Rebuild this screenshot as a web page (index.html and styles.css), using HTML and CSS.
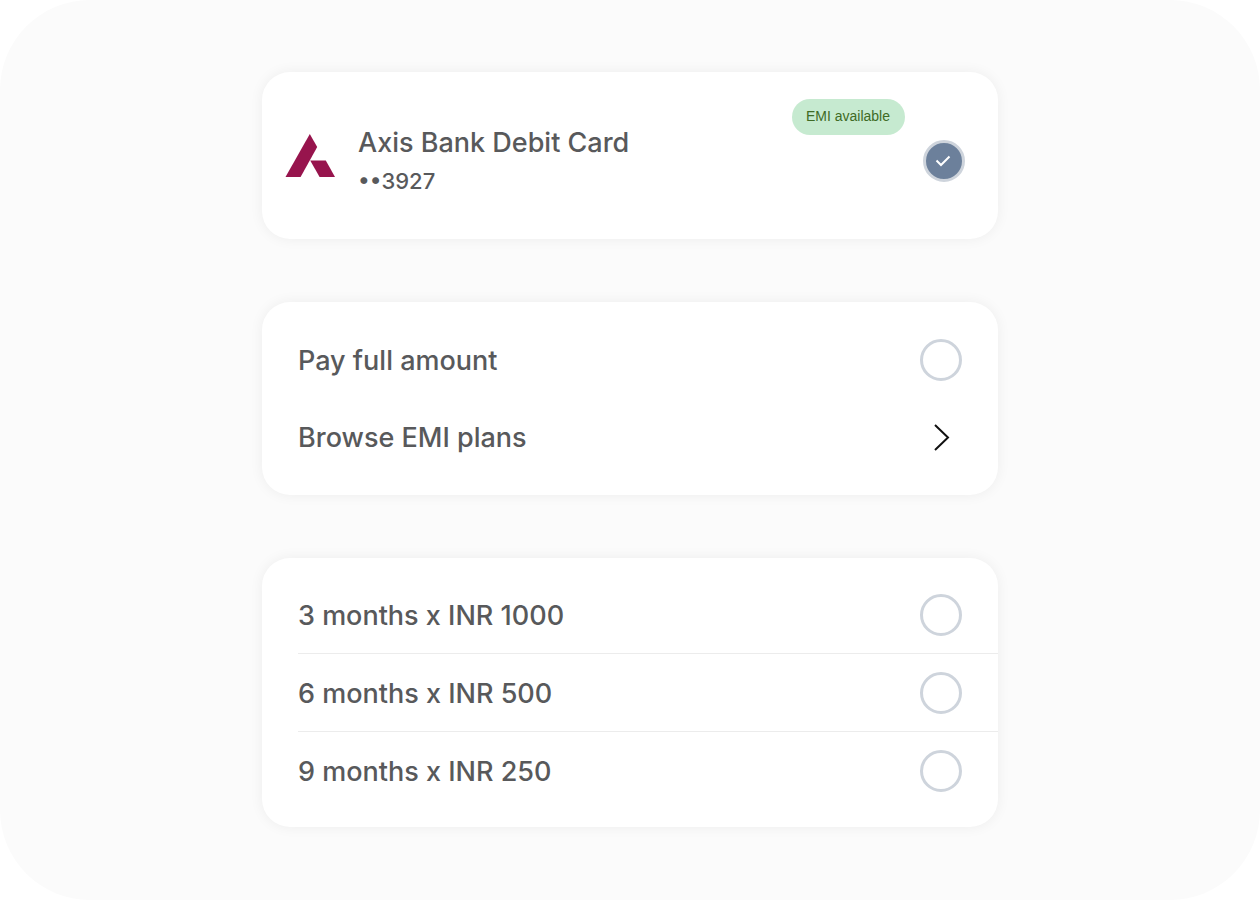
FILE: index.html
```html
<!DOCTYPE html>
<html lang="en">
<head>
  <meta charset="UTF-8">
  <meta name="viewport" content="width=device-width, initial-scale=1.0">
  <title>Choose EMI plan</title>
  <link rel="stylesheet" href="styles.css">
</head>
<body>
<main class="screen">
  <form class="payment">

    <label class="card bank-card">
      <svg class="bank-logo" viewBox="0 0 50 44" aria-hidden="true">
        <path d="M24.8 0L32.2 13L15.6 43H0.5Z"/>
        <path d="M25.2 26.5H40.8L50 43H34.6Z"/>
      </svg>
      <span class="bank-info">
        <span class="bank-name">Axis Bank Debit Card</span>
        <span class="bank-number">••3927</span>
      </span>
      <span class="badge">EMI available</span>
      <span class="check">
        <input type="radio" class="radio" name="card" value="3927" checked>
        <svg class="check-icon" viewBox="0 0 42 42" aria-hidden="true">
          <path d="M13.5 20.5L18 25L26.5 16.5"/>
        </svg>
      </span>
    </label>

    <div class="card options">
      <label class="row">
        <span>Pay full amount</span>
        <input type="radio" class="radio" name="plan" value="full">
      </label>
      <button type="button" class="row browse">
        <span>Browse EMI plans</span>
        <svg class="chevron" viewBox="0 0 42 42" aria-hidden="true">
          <path d="M15 9L28 21.5L15 34"/>
        </svg>
      </button>
    </div>

    <div class="card plans">
      <label class="row">
        <span>3 months x INR 1000</span>
        <input type="radio" class="radio" name="plan" value="3">
      </label>
      <label class="row">
        <span>6 months x INR 500</span>
        <input type="radio" class="radio" name="plan" value="6">
      </label>
      <label class="row">
        <span>9 months x INR 250</span>
        <input type="radio" class="radio" name="plan" value="9">
      </label>
    </div>

  </form>
</main>
</body>
</html>
```
FILE: styles.css
```css
* { box-sizing: border-box; }
body { margin: 0; background: #fff; color: #58595b; font-family: Inter, "Liberation Sans", sans-serif; font-size: 27px; font-weight: 500; line-height: 36px; }

.screen { min-height: 100vh; padding: 72px 24px; background: #fbfbfb; border-radius: 90px; }
.payment { display: flex; flex-direction: column; gap: 63px; max-width: 736px; margin: 0 auto; }
.card { background: #fff; border-radius: 28px; box-shadow: 0 0 14px rgba(0, 0, 0, 0.06); }

/* selected card */
.bank-card { display: flex; align-items: center; min-height: 167px; padding: 27px 33px 17px 23px; cursor: pointer; }
.bank-logo { width: 50px; height: 44px; margin-bottom: 10px; fill: #97144d; flex: none; }
.bank-info { flex: 1; display: flex; flex-direction: column; gap: 4px; padding-top: 1px; margin-left: 23px; }
.bank-number { font-size: 22px; line-height: 32px; }
.badge { align-self: flex-start; padding: 0 15px 2px 14px; border-radius: 18px; background: #c6ead0; color: #3f6b25; font-family: "Liberation Sans", Arial, sans-serif; font-size: 14px; font-weight: 400; line-height: 34px; }
.check { position: relative; display: flex; margin-left: 18px; }
.check-icon { position: absolute; inset: 0; fill: none; stroke: #fff; stroke-width: 2; pointer-events: none; }

/* radios */
.radio { appearance: none; flex: none; width: 42px; height: 42px; margin: 0; border: 3px solid #ced4dc; border-radius: 50%; background: #fff; cursor: pointer; }
.radio:checked { background: #6c809b; }

/* option rows */
.row { display: flex; align-items: center; justify-content: space-between; width: 100%; height: 77px; padding-right: 36px; cursor: pointer; }
.row span { padding-top: 2px; }
.options { padding: 19px 0 20px 36px; }
.browse { border: none; background: none; color: inherit; font: inherit; text-align: left; padding-left: 0; }
.chevron { width: 42px; height: 42px; fill: none; stroke: #111; stroke-width: 2; }
.plans { padding: 18px 0 18px 36px; }
.plans .row + .row { height: 78px; border-top: 1px solid #ececec; }
```
